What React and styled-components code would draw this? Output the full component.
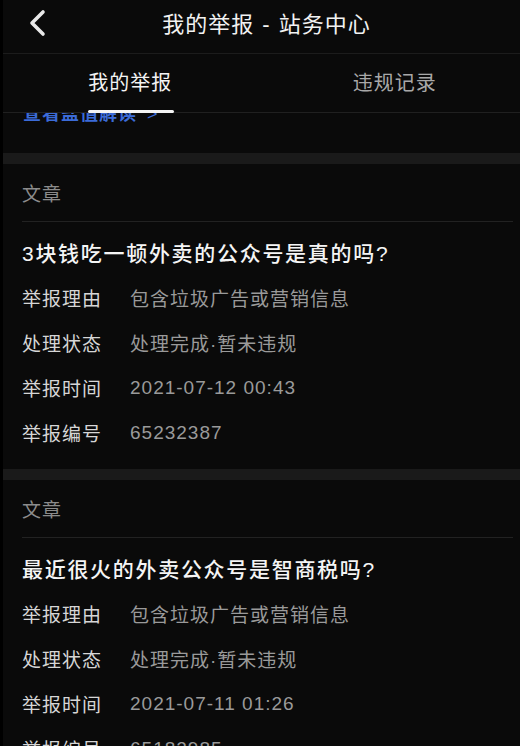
import styled, { createGlobalStyle } from "styled-components";

const GlobalStyle = createGlobalStyle`
  html, body {
    margin: 0;
    padding: 0;
    background: #000;
  }
  * { box-sizing: border-box; }
`;

const reports = [
  {
    type: "文章",
    title: "3块钱吃一顿外卖的公众号是真的吗?",
    reason: "包含垃圾广告或营销信息",
    status: "处理完成·暂未违规",
    time: "2021-07-12 00:43",
    id: "65232387",
  },
  {
    type: "文章",
    title: "最近很火的外卖公众号是智商税吗?",
    reason: "包含垃圾广告或营销信息",
    status: "处理完成·暂未违规",
    time: "2021-07-11 01:26",
    id: "65182985",
  },
];

export default function App() {
  return (
    <>
      <GlobalStyle />
      <Page>
        <Header>
          <Back aria-label="back">
            <svg width="20" height="28" viewBox="0 0 20 28">
              <path d="M16 3 L5 14 L16 25" fill="none" stroke="#e8e8e8" strokeWidth="3.6" strokeLinecap="round" strokeLinejoin="round" />
            </svg>
          </Back>
          <HeaderTitle>我的举报 - 站务中心</HeaderTitle>
        </Header>
        <Tabs>
          <Tab $active>我的举报</Tab>
          <Tab>违规记录</Tab>
        </Tabs>
        <Hint>
          <HintText>查看盐值解读<Arrow>&gt;</Arrow></HintText>
        </Hint>
        {reports.map((r) => (
          <Section key={r.id}>
            <Band />
            <Card>
              <Category>{r.type}</Category>
              <Body>
                <Title>{r.title}</Title>
                <Row><Label>举报理由</Label><Value>{r.reason}</Value></Row>
                <Row><Label>处理状态</Label><Value>{r.status}</Value></Row>
                <Row><Label>举报时间</Label><Value>{r.time}</Value></Row>
                <Row><Label>举报编号</Label><Value>{r.id}</Value></Row>
              </Body>
            </Card>
          </Section>
        ))}
      </Page>
    </>
  );
}

const Page = styled.div`
  width: 520px;
  height: 746px;
  overflow: hidden;
  background: #0a0a0a;
  border-left: 3px solid #000;
  font-family: "Liberation Sans", "Noto Sans CJK SC", sans-serif;
  color: #fff;
`;

const Header = styled.div`
  position: relative;
  height: 54px;
  display: flex;
  align-items: center;
  justify-content: center;
  border-bottom: 1px solid #1c1c1c;
`;

const Back = styled.div`
  position: absolute;
  left: 24px;
  top: 9px;
  display: flex;
`;

const HeaderTitle = styled.div`
  font-size: 22px;
  color: #f2f2f2;
  letter-spacing: 1px;
  word-spacing: 1px;
  margin-left: 10px;
  margin-top: -9px;
`;

const Tabs = styled.div`
  position: relative;
  z-index: 1;
  height: 59px;
  display: flex;
  border-bottom: 1px solid #202020;
  background: #0a0a0a;
`;

const Tab = styled.div`
  position: relative;
  flex: 1;
  display: flex;
  align-items: center;
  justify-content: center;
  font-size: 20px;
  letter-spacing: 1px;
  padding-bottom: 4px;
  padding-left: ${(p) => (p.$active ? "2px" : "14px")};
  color: ${(p) => (p.$active ? "#f4f4f4" : "#a8a8a8")};
  &::after {
    content: "";
    display: ${(p) => (p.$active ? "block" : "none")};
    position: absolute;
    bottom: -1px;
    left: 50%;
    transform: translateX(-50%);
    margin-left: 2px;
    width: 86px;
    height: 3px;
    border-radius: 2px;
    background: #f4f4f4;
  }
`;

const Hint = styled.div`
  height: 40px;
  overflow: hidden;
  padding-left: 20px;
`;

const HintText = styled.div`
  margin-top: -12px;
  font-size: 18px;
  line-height: 26px;
  font-weight: 700;
  color: #3b6bd8;
  letter-spacing: 1px;
`;

const Arrow = styled.span`
  font-weight: 400;
  margin-left: 10px;
`;

const Section = styled.div``;

const Band = styled.div`
  height: 11px;
  background: #1a1a1a;
`;

const Card = styled.div`
  padding: 0 7px 14px 19px;
`;

const Category = styled.div`
  height: 58px;
  display: flex;
  align-items: center;
  font-size: 19px;
  letter-spacing: 1px;
  color: #8c8c8c;
  border-bottom: 1px solid #222;
`;

const Body = styled.div`
  padding-top: 8px;
`;

const Title = styled.div`
  height: 45px;
  display: flex;
  align-items: center;
  padding-bottom: 2px;
  font-size: 21px;
  letter-spacing: 1.7px;
  font-weight: 500;
  color: #f5f5f5;
`;

const Row = styled.div`
  height: 45px;
  display: flex;
  align-items: center;
  font-size: 19px;
  letter-spacing: 1px;
`;

const Label = styled.div`
  width: 108px;
  flex-shrink: 0;
  color: #d6d6d6;
`;

const Value = styled.div`
  color: #9a9a9a;
`;
